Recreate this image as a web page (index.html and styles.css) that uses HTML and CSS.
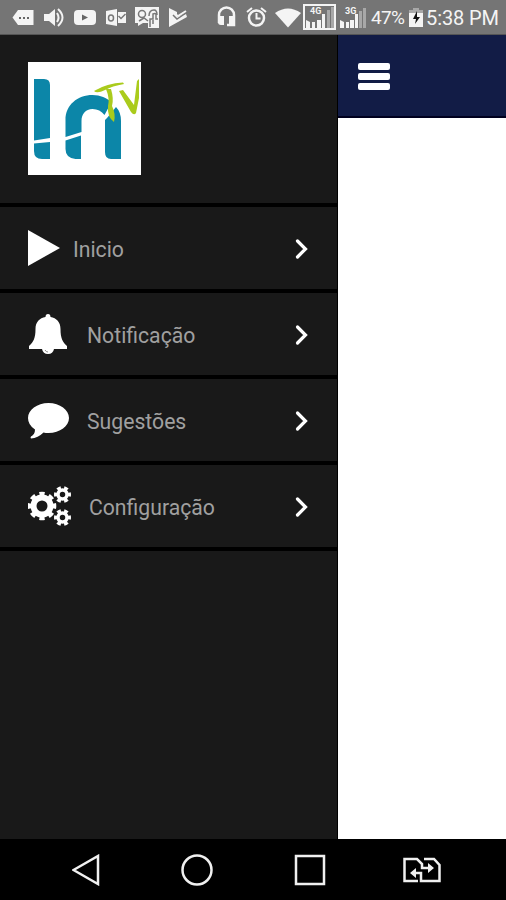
FILE: index.html
```html
<!DOCTYPE html>
<html lang="pt-BR">
<head>
  <meta charset="UTF-8">
  <meta name="viewport" content="width=device-width, initial-scale=1.0">
  <title>In TV</title>
  <link rel="stylesheet" href="styles.css">
</head>
<body>
  <div class="status-bar">
    <div class="notifications">
      <svg width="22" height="24" viewBox="0 0 22 24"><path class="fill" d="M6 5h15.500v15H6L.5 12.500z"/><path class="ink" d="M7 12h2v2H7zM11 12h2v2h-2zM15 12h2v2h-2z"/></svg>
      <svg width="22" height="24" viewBox="0 0 22 24"><path class="fill" d="M1 9h5l6-5v17l-6-5H1z"/><path class="line" d="M14 8q3 4.500 0 9M15 4q9 8.500 0 17"/></svg>
      <svg width="22" height="24" viewBox="0 0 22 24"><rect class="fill" y="5" width="22" height="15" rx="4"/><path class="ink" d="M8 9.500l6 3-6 3z"/></svg>
      <svg width="21" height="24" viewBox="0 0 21 24"><path class="fill" d="M1 6l11-2v17L1 19z"/><path class="fill" d="M13 7h8v11h-8z"/><ellipse class="ink-line" cx="6" cy="13" rx="2.500" ry="3"/><path class="ink-line" d="M13.500 11l2.500 2.500 4.500-4.500"/></svg>
      <svg width="25" height="24" viewBox="0 0 25 24"><path class="fill" d="M0 2h24v21H13v-5H8l-5 3v-3H0z"/><circle class="ink-line" cx="7" cy="9" r="3.500"/><path class="ink-line" d="M4 16l5-3 4 3M14 11q0-6 5-6 3 0 3 5M15 22v-8h3V9q2-1 3 0v5h2M18 15v4"/></svg>
      <svg width="19" height="24" viewBox="0 0 19 24"><path class="fill" d="M0 3l8 4v5l9-3 1 3L0 22z"/><path class="ink-line" d="M4 10l4 4 9-6"/><path class="line" d="M6 9l3 2 8-5"/></svg>
    </div>
    <div class="indicators">
      <svg width="19" height="24" viewBox="0 0 19 24"><path class="line bold" d="M2 18V10a7.500 7.500 0 0 1 15 0v10h-7"/><path class="fill" d="M2 11h5v9H4q-3 0-3-3zM12 11h5v8h-5z"/></svg>
      <svg width="21" height="24" viewBox="0 0 21 24"><circle class="line bold" cx="10.500" cy="13" r="7.500"/><path class="line" d="M1 7l5-4M20 7l-5-4M10.500 8v5.500h4"/></svg>
      <svg class="wifi" width="26" height="24" viewBox="0 0 26 24"><path class="fill" d="M0 8q13-9 26 0L13 22.500z"/></svg>
      <svg class="sim" width="33" height="26" viewBox="0 0 33 26">
        <rect class="line" x="1" y="1" width="31" height="24"/>
        <path class="fill" d="M3 16l4 2v6H3zM9 18h3v6H9zM14 16h4v8h-4zM19 10h3v14h-3z"/><path class="dim" d="M24 6h3v18h-3zM28 3h3v21h-3z"/>
        <text class="sim-type" x="7" y="10">4G</text>
      </svg>
      <svg class="sim" width="28" height="26" viewBox="0 0 28 26">
        <path class="fill" d="M1 16l4 2v6H1zM7 18h3v6H7zM11 16h4v8h-4zM16 10h3v14h-3z"/><path class="dim" d="M20 7h3v17h-3zM24 4h3v20h-3z"/>
        <text class="sim-type" x="6" y="10">3G</text>
      </svg>
      <span class="battery-level">47%</span>
      <svg class="battery" width="14" height="24" viewBox="0 0 14 24"><path class="dim" d="M4 3h6v2h4v5H0V5h4z"/><path class="fill" d="M0 8h14v14H0z"/><path class="bolt" d="M8 6l-4 8h3l-1 5 5-7H8z"/></svg>
      <span class="clock">5:38 PM</span>
    </div>
  </div>

  <div class="app">
    <aside class="drawer">
      <div class="drawer-header">
        <svg class="logo" viewBox="0 0 113 113">
          <path class="logo-blue" d="M6 17h10q6 0 6 6v53L6 78.500zM6 81.500l16-1.500v17h-8q-8 0-8-8z"/>
          <path class="logo-blue" d="M37.500 75V58c0-15 12-25 27-25 8 0 14 3 19 7l-7 13c-3-4-7-6-12-6-7 0-11 5-11 12v11zM37.500 78.500l15.500-5v23.500h-5.500q-10-1-10-10zM79 56l9-11q5 5 5 14v38H83q-6 0-6-7V58z"/>
          <path class="logo-green" d="M66 29q13-8 29-8.500l1 1.500q-12 2-19 6-8 4-11 1zM78 27l5 0q3 10 1 17 4 8 2 16-7-5-6-16 2-7-2-17zM91 29l4-1 11 15 3-24 2-2v19l-3 15q-2 3-5-1z"/>
        </svg>
      </div>
      <nav class="menu">
        <a class="menu-item" href="#">
          <svg class="icon icon-play" viewBox="0 0 32 36"><path d="M0 0v36l32-18z"/></svg>
          <span class="label">Inicio</span>
          <svg class="chevron" viewBox="0 0 14 22"><path d="M2.500 3l8 8-8 8"/></svg>
        </a>
        <a class="menu-item" href="#">
          <svg class="icon icon-bell" viewBox="0 0 40 42"><path d="M17.500 4q0-3 2.500-3t2.500 3c6 1 10 5 10 12 0 9 2 13 6.500 17v3H26q-1 5-6 5t-6-5H1v-3c4.500-4 6.500-8 6.500-17C7.500 9 11.500 5 17.500 4z"/><path class="clapper" d="M17 37q1 2 3 2"/></svg>
          <span class="label">Notificação</span>
          <svg class="chevron" viewBox="0 0 14 22"><path d="M2.500 3l8 8-8 8"/></svg>
        </a>
        <a class="menu-item" href="#">
          <svg class="icon icon-comment" viewBox="0 0 41 36"><path d="M20.500 0C32 0 41 7 41 15s-9 15-20.500 15q-3 0-5-.500Q10 35 3 35.500q-1-1 0-2 4-2 4-7Q0 22 0 15C0 7 9 0 20.500 0z"/></svg>
          <span class="label">Sugestões</span>
          <svg class="chevron" viewBox="0 0 14 22"><path d="M2.500 3l8 8-8 8"/></svg>
        </a>
        <a class="menu-item" href="#">
          <svg class="icon icon-gears" viewBox="0 0 43 40">
            <circle class="gear" cx="14" cy="20" r="8.500"/>
            <circle class="teeth" cx="14" cy="20" r="12.300" pathLength="80"/>
            <circle class="gear small" cx="34.500" cy="8.500" r="4.500"/>
            <circle class="teeth small" cx="34.500" cy="8.500" r="7" pathLength="60"/>
            <circle class="gear small" cx="34.500" cy="31.500" r="4.500"/>
            <circle class="teeth small" cx="34.500" cy="31.500" r="7" pathLength="60"/>
          </svg>
          <span class="label">Configuração</span>
          <svg class="chevron" viewBox="0 0 14 22"><path d="M2.500 3l8 8-8 8"/></svg>
        </a>
      </nav>
    </aside>
    <main class="content">
      <header class="topbar">
        <button class="hamburger" aria-label="Menu"><span></span><span></span><span></span></button>
      </header>
    </main>
  </div>

  <div class="nav-bar">
    <svg width="28" height="32" viewBox="0 0 28 32"><path d="M26 2v28L1.500 16z"/></svg>
    <svg width="32" height="32" viewBox="0 0 32 32"><circle cx="16" cy="16" r="14.500"/></svg>
    <svg width="32" height="32" viewBox="0 0 32 32"><path d="M2 2h28v28H2z"/></svg>
    <svg class="swap" width="38" height="32" viewBox="0 0 38 32"><path d="M15 27H1.500V5H14l5 5v4h8M21 5h10l5.500 6v16H18v-8h-8"/><path class="head" d="M25 9l6 5-6 5zM13 14l-6 5 6 5z"/></svg>
  </div>
</body>
</html>
```
FILE: styles.css
```css
:root {
  --drawer: #191919;
  --navy: #121c46;
  --status: #757575;
  --label: #a0a0a0;
}
* {
  box-sizing: border-box;
}
body {
  margin: 0;
  height: 100vh;
  display: flex;
  flex-direction: column;
  overflow: hidden;
  font-family: Roboto, sans-serif;
  background: #000;
}
svg {
  display: block;
  flex-shrink: 0;
}

/* Status bar */
.status-bar {
  height: 35px;
  display: flex;
  justify-content: space-between;
  background: var(--status);
  border-bottom: 1px solid #555;
  color: #f4f4f4;
}
.notifications,
.indicators {
  display: flex;
  align-items: center;
}
.notifications {
  gap: 9px;
  padding-left: 12px;
}
.indicators {
  gap: 10px;
  padding-right: 7px;
}
.status-bar .fill {
  fill: #f4f4f4;
}
.status-bar .dim {
  fill: #a8a8a8;
}
.status-bar .ink {
  fill: #666;
}
.status-bar .line {
  fill: none;
  stroke: #f4f4f4;
  stroke-width: 2;
}
.status-bar .bold {
  stroke-width: 2.5;
}
.status-bar .ink-line {
  fill: none;
  stroke: #777;
  stroke-width: 1.5;
}
.status-bar .bolt {
  fill: #111;
}
.wifi {
  margin-left: -2px;
}
.sim {
  margin-left: -8px;
}
.sim + .sim {
  margin-left: -7px;
}
.sim-type {
  font-size: 9px;
  font-weight: bold;
  fill: #f4f4f4;
}
.battery-level {
  width: 35px;
  margin-left: -6px;
  padding-top: 1px;
  font-size: 19px;
  letter-spacing: -0.7px;
}
.battery {
  margin-left: -7px;
}
.clock {
  width: 73px;
  margin-left: -7px;
  padding-top: 1px;
  font-size: 20px;
  letter-spacing: -0.1px;
  white-space: nowrap;
}

/* App */
.app {
  flex: 1;
  display: flex;
  min-height: 0;
}
.drawer {
  width: 338px;
  background: var(--drawer);
  border-right: 1px solid #000;
}
.drawer-header {
  height: 172px;
  padding: 27px 28px 0;
  border-bottom: 4px solid #000;
}
.logo {
  width: 113px;
  height: 113px;
  background: #fff;
}
.logo-blue {
  fill: #0c86a8;
}
.logo-green {
  fill: #aacb1c;
}
.menu-item {
  height: 86px;
  display: flex;
  align-items: center;
  padding: 2px 28px 0;
  border-bottom: 4px solid #000;
  color: var(--label);
  font-size: 21.2px;
  text-decoration: none;
}
.icon {
  fill: #fff;
}
.icon-play {
  width: 32px;
  height: 36px;
  margin: 0 13px 2px 0;
}
.icon-bell {
  width: 40px;
  height: 42px;
  margin: 0 19px 2px 0;
}
.icon-comment {
  width: 41px;
  height: 36px;
  margin-right: 18px;
}
.icon-gears {
  width: 43px;
  height: 40px;
  margin: 0 18px 2px 0;
}
.clapper {
  fill: none;
  stroke: #888;
  stroke-width: 1;
}
.gear {
  fill: none;
  stroke: #fff;
  stroke-width: 6;
}
.gear.small {
  stroke-width: 3.5;
}
.teeth {
  fill: none;
  stroke: #fff;
  stroke-width: 4;
  stroke-dasharray: 5.4 4.6;
  stroke-dashoffset: 2.7;
}
.teeth.small {
  stroke-width: 3;
}
.chevron {
  width: 14px;
  height: 22px;
  margin-left: auto;
  fill: none;
  stroke: #fff;
  stroke-width: 3.2;
  stroke-linecap: round;
}
.content {
  flex: 1;
  background: #fff;
}
.topbar {
  height: 83px;
  display: flex;
  align-items: center;
  padding: 2px 0 0 20px;
  background: var(--navy);
  border-bottom: 2px solid #00001e;
}
.hamburger {
  display: flex;
  flex-direction: column;
  gap: 3px;
  padding: 0;
  border: 0;
  background: none;
}
.hamburger span {
  width: 32px;
  height: 7px;
  border-radius: 2px;
  background: #fff;
}

/* Android navigation */
.nav-bar {
  height: 61px;
  display: flex;
  align-items: center;
  gap: 81px;
  padding-left: 72px;
}
.nav-bar svg {
  fill: none;
  stroke: #f0f0f0;
  stroke-width: 2.5;
}
.nav-bar .swap {
  margin-left: -4px;
}
.nav-bar .head {
  fill: #f0f0f0;
  stroke: none;
}
```
